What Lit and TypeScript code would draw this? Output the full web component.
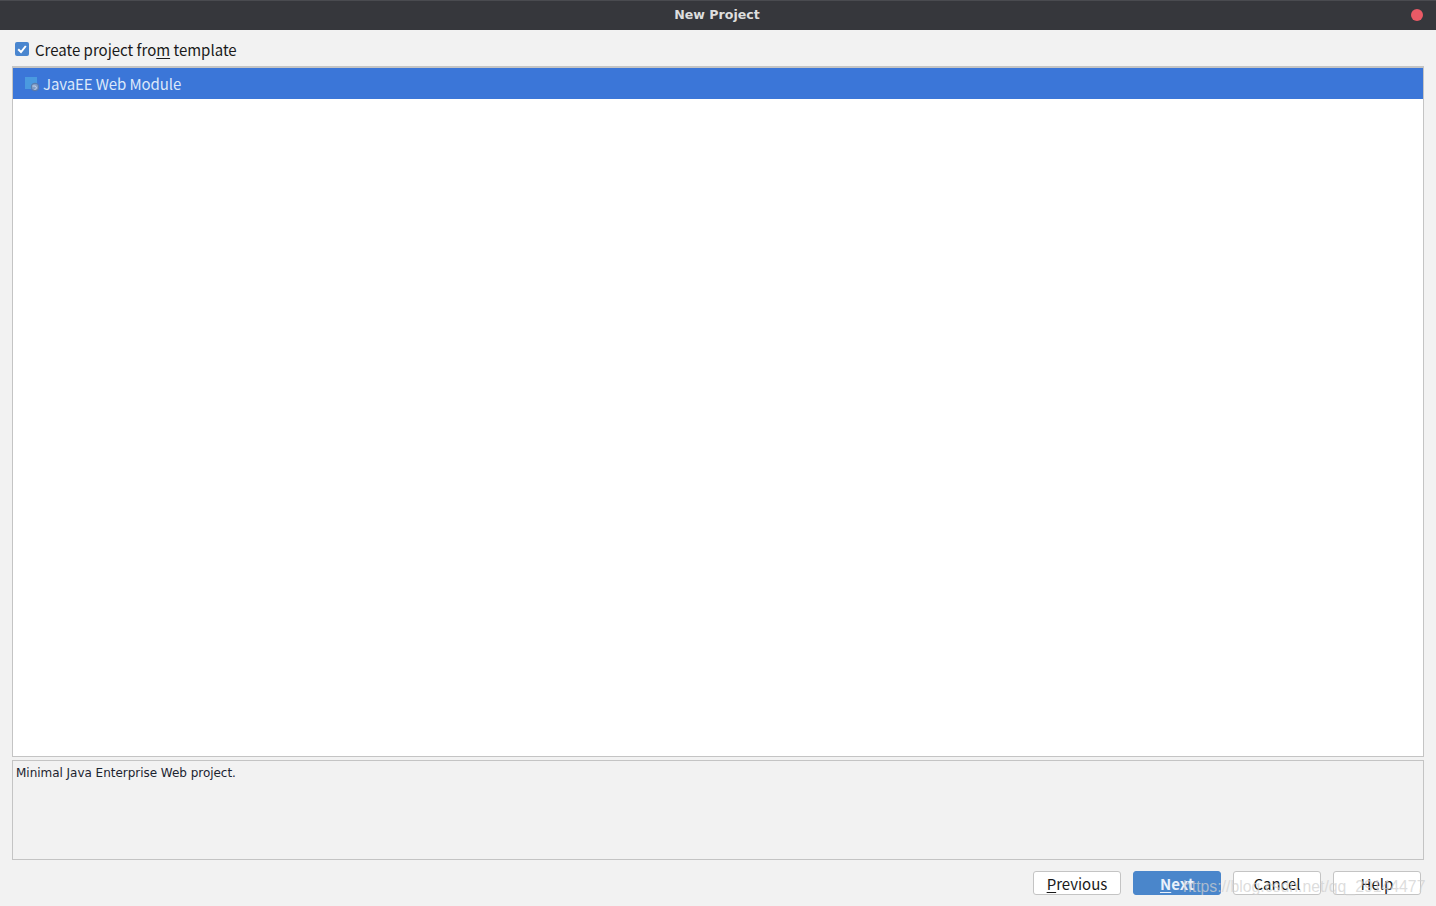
import { LitElement, html, css } from "lit";
import { customElement } from "lit/decorators.js";

@customElement("app-root")
export class AppRoot extends LitElement {
  static styles = css`
    :host { display: flex; flex-direction: column; position: relative; width: 1436px; height: 906px; overflow: hidden; background: #f2f2f2; font-family: "Noto Sans CJK SC", "Noto Sans", sans-serif; color: #1a1a1a; }
    .title { flex: none; height: 30px; box-sizing: border-box; display: flex; align-items: center; justify-content: center; position: relative; background: #36373c; border-top: 1px solid #4a4b50; color: #dedede; font: bold 12.6px "DejaVu Sans", sans-serif; padding: 0 2px 2px 0; }
    .close { position: absolute; right: 13px; top: 8px; width: 12px; height: 12px; border-radius: 50%; background: #ea5a66; }
    .check { flex: none; height: 36px; display: flex; align-items: center; gap: 6px; padding: 2px 0 0 15px; box-sizing: border-box; font-size: 15px; }
    .box { width: 14px; height: 14px; border-radius: 2px; background: #4a86cf; display: block; margin-top: -1px; }
    u { text-underline-offset: 2px; }
    .list { flex: none; height: 691px; margin: 0 12px; box-sizing: border-box; border: 1px solid #c4c4c4; border-top-width: 2px; background: #fff; }
    .row { height: 31px; background: #3b76d8; color: #dce8fa; display: flex; align-items: center; gap: 4px; padding-left: 12px; box-sizing: border-box; font-size: 15px; letter-spacing: -0.1px; }
    .desc { flex: none; height: 100px; margin: 3px 12px 0; box-sizing: border-box; border: 1px solid #c4c4c4; padding: 4px 3px; font: 12px/16px "DejaVu Sans", sans-serif; letter-spacing: -0.03px; color: #1c2430; }
    .actions { flex: none; display: flex; justify-content: flex-end; gap: 12px; padding: 11px 15px 0 0; }
    .btn { width: 88px; height: 24px; box-sizing: border-box; border: 1px solid #c4c4c4; border-radius: 3px; background: #fff; display: flex; align-items: center; justify-content: center; font-size: 15px; line-height: 1; padding: 1px 0 0; }
    .primary { background: #4a86cb; border-color: #4a86cb; color: #e9f1fb; font-weight: 700; }
    .mark { position: absolute; left: 1183px; top: 878px; font: 15.8px "Liberation Sans", sans-serif; color: rgba(208, 208, 208, 0.72); white-space: nowrap; pointer-events: none; }
  `;

  render() {
    return html`
      <div class="title">New Project<span class="close"></span></div>
      <div class="check">
        <svg class="box" viewBox="0 0 14 14"><path d="M3.2 7.2 6 10l4.8-6" fill="none" stroke="#fff" stroke-width="2"/></svg>
        <span>Create project fro<u>m</u> template</span>
      </div>
      <div class="list">
        <div class="row">
          <svg width="14" height="16" viewBox="0 0 14 16"><rect x="0" y="1" width="12" height="12" fill="#4a9ae0"/><circle cx="10" cy="11" r="3.8" fill="#7f9cc6" stroke="#5878a8" stroke-width="1"/><path d="M7.5 10h3l1 2-2 2" fill="none" stroke="#c5d3e8" stroke-width="1"/></svg>
          <span>JavaEE Web Module</span>
        </div>
      </div>
      <div class="desc">Minimal Java Enterprise Web project.</div>
      <div class="actions">
        <div class="btn"><span><u>P</u>revious</span></div>
        <div class="btn primary"><span><u>N</u>ext</span></div>
        <div class="btn"><span>Cancel</span></div>
        <div class="btn"><span>Help</span></div>
      </div>
      <div class="mark">https://blog.csdn.net/qq_29144477</div>
    `;
  }
}
